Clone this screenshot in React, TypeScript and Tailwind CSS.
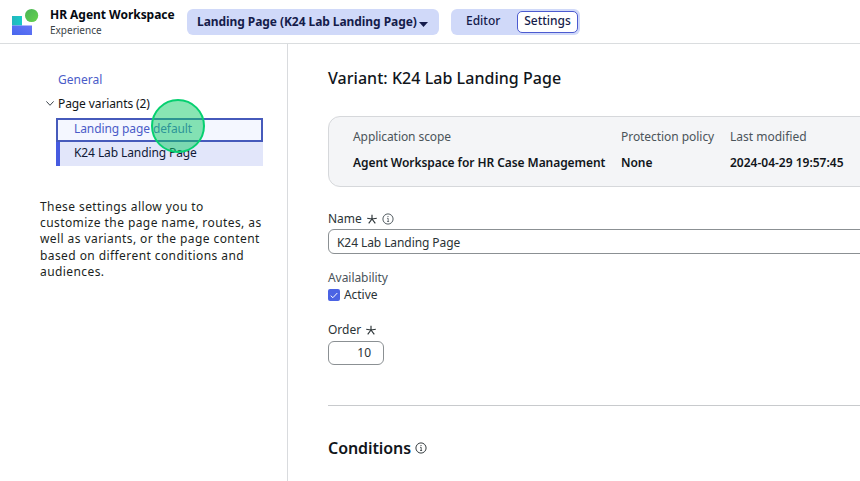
import React from "react";

function InfoIcon({ className = "" }: { className?: string }) {
  return (
    <svg viewBox="0 0 12 12" className={`h-3 w-3 shrink-0 ${className}`} fill="none" stroke="currentColor">
      <circle cx="6" cy="6" r="5.1" strokeWidth="0.95" />
      <path d="M5 5.3h1.2v3.2M5.1 8.5h2" strokeWidth="0.8" />
      <circle cx="6" cy="3.5" r="0.6" fill="currentColor" stroke="none" />
    </svg>
  );
}

function RequiredIcon() {
  return (
    <svg viewBox="0 0 12 12" className="h-3 w-3 shrink-0" stroke="#2b3336" strokeWidth="1.15" fill="none">
      <path d="M6 6V1.7M6 6L1.2 5.2M6 6l4.8-.8M6 6l-3.3 4.4M6 6l3.3 4.4" />
    </svg>
  );
}

function Logo() {
  return (
    <svg viewBox="0 0 28 28" className="h-7 w-7 shrink-0">
      <defs>
        <linearGradient id="teal" x1="0" x2="1"><stop stopColor="#25b5bd" /><stop offset="1" stopColor="#16ccc9" /></linearGradient>
        <linearGradient id="green" x1="0" y1="0" x2="1" y2="1"><stop stopColor="#48b456" /><stop offset="1" stopColor="#67d24d" /></linearGradient>
        <linearGradient id="blue" x1="0" y1="1" x2="1" y2="0"><stop stopColor="#4767ed" /><stop offset="1" stopColor="#6675f7" /></linearGradient>
      </defs>
      <rect x="0" y="8" width="10" height="9.5" fill="url(#teal)" />
      <rect x="0" y="17.5" width="20" height="9.5" fill="url(#blue)" />
      <circle cx="19.6" cy="7.5" r="6.6" fill="url(#green)" />
    </svg>
  );
}

function Header() {
  return (
    <header className="flex h-[44px] shrink-0 border-b border-[#dadddf] pl-3">
      <div className="flex w-[175px] shrink-0 pt-2">
        <Logo />
        <div className="-mt-[1px] ml-[10px] whitespace-nowrap">
          <div className="text-[12px] leading-4 font-bold tracking-[-0.03px] text-[#050a12]">HR Agent Workspace</div>
          <div className="text-[10px] leading-[15px] text-[#3a4347]">Experience</div>
        </div>
      </div>
      <button className="mt-[9px] flex h-[26px] w-[252px] shrink-0 items-center rounded-md bg-[#d0d9f9] pl-[10px] text-[12px] font-bold whitespace-nowrap text-[#151c4b]">
        <span className="leading-6 tracking-[-0.07px]">Landing Page (K24 Lab Landing Page)</span>
        <svg viewBox="0 0 9 5" className="mt-[4px] ml-[2px] h-[5px] w-[9px]"><path d="M0 0h9L4.5 5z" fill="currentColor" /></svg>
      </button>
      <div className="mt-[9px] ml-3 flex h-[26px] w-[129px] shrink-0 rounded-md bg-[#d0d9f9] text-[12px] font-medium text-[#151c4b]">
        <button className="w-[66px] pb-[2px] pl-[15px] text-left">Editor</button>
        <button className="mt-[2px] h-[22px] w-[61px] rounded-[5px] border border-[#4c5bd0] bg-white pb-[2px] leading-[18px]">Settings</button>
      </div>
    </header>
  );
}

function Sidebar() {
  return (
    <aside className="w-[288px] shrink-0 border-r border-[#d9dbde] pt-6 text-[12px]">
      <div className="pl-[58px] leading-6 text-[#4a5cc8]">General</div>
      <div className="flex items-center pl-[46px] leading-6 tracking-[-0.1px] text-[#101417]">
        <svg viewBox="0 0 8 5" className="-mt-[2px] mr-1 h-[5px] w-2" fill="none" stroke="#3d454d"><path d="M.4.4L4 4.3 7.6.4" /></svg>
        Page variants (2)
      </div>
      <div className="relative ml-14 w-[207px] pt-[2px] tracking-[-0.1px]">
        <div className="h-6 border-2 border-[#465abb] bg-[#f4f7ff] pl-4 leading-[18px] text-[#4a5cc8]">Landing page default</div>
        <div className="h-6 border-l-4 border-[#465be0] bg-[#e2e6fa] pl-[14px] leading-[22px] text-[#101936]">K24 Lab Landing Page</div>
        <div className="absolute -top-[17px] left-[95px] h-[54px] w-[54px] rounded-full border-2 border-[#06d070] bg-[#12cc6880]" />
      </div>
      <p className="mt-[33px] ml-10 w-[235px] leading-[16.2px] tracking-[0.42px] text-[#1b1f22]">
        These settings allow you to<br />customize the page name, routes, as<br />well as variants, or the page content<br />based on different conditions and<br />audiences.
      </p>
    </aside>
  );
}

function Detail({ label, value, className }: { label: string; value: string; className: string }) {
  return (
    <div className={`shrink-0 whitespace-nowrap ${className}`}>
      <div className="leading-[26px] text-[#4b545a]">{label}</div>
      <div className="leading-[26px] font-semibold text-[#11161b]">{value}</div>
    </div>
  );
}

function VariantSettings() {
  return (
    <main className="min-w-0 flex-1 overflow-hidden pt-[22px] pl-10 text-[12px] text-[#2b3336]">
      <h1 className="text-[16px] leading-6 font-medium tracking-[0.04px] text-[#11161b]">Variant: K24 Lab Landing Page</h1>
      <section className="mt-[26px] flex h-[71px] w-[560px] rounded-xl border border-[#d6d8db] bg-[#f4f5f7] pt-[7px] pl-6">
        <Detail className="w-[268px] tracking-[-0.07px]" label="Application scope" value="Agent Workspace for HR Case Management" />
        <Detail className="w-[109px] tracking-[-0.05px]" label="Protection policy" value="None" />
        <Detail className="w-[130px]" label="Last modified" value="2024-04-29 19:57:45" />
      </section>
      <div className="mt-[23px] flex h-[18px] items-center"><span className="w-[38px]">Name</span><RequiredIcon /><InfoIcon className="ml-1 text-[#4b545a]" /></div>
      <div className="mt-[1px] h-[25px] w-[560px] rounded-md border border-[#8b9093] pl-2 leading-[25px] tracking-[-0.08px]">K24 Lab Landing Page</div>
      <div className="mt-[15px] leading-[18px] tracking-[-0.05px] text-[#4b545a]">Availability</div>
      <label className="-mt-[1px] flex h-[18px] items-center tracking-[-0.05px]">
        <span className="mr-1 flex h-3 w-3 items-center justify-center rounded-[2px] bg-[#4b63e4]">
          <svg viewBox="0 0 8 7" className="h-[7px] w-2" fill="none" stroke="white"><path d="M.7 3.7l2.2 2L7.3 1" /></svg>
        </span>
        Active
      </label>
      <div className="mt-[17px] flex h-[18px] items-center"><span className="w-[37px]">Order</span><RequiredIcon /></div>
      <div className="mt-[2px] h-6 w-14 rounded-md border border-[#8b9093] pr-3 text-right leading-[22px]">10</div>
      <div className="mt-10 border-t border-[#c8cacd]" />
      <h2 className="mt-[30px] flex items-center text-[16px] leading-6 font-semibold tracking-[-0.08px] text-[#11161b]">
        Conditions <InfoIcon className="ml-1 text-[#2b3336]" />
      </h2>
    </main>
  );
}

export default function App() {
  return (
    <div className="flex h-[481px] w-[860px] flex-col overflow-hidden bg-white font-['Noto_Sans',sans-serif]">
      <Header />
      <div className="flex min-h-0 flex-1">
        <Sidebar />
        <VariantSettings />
      </div>
    </div>
  );
}
